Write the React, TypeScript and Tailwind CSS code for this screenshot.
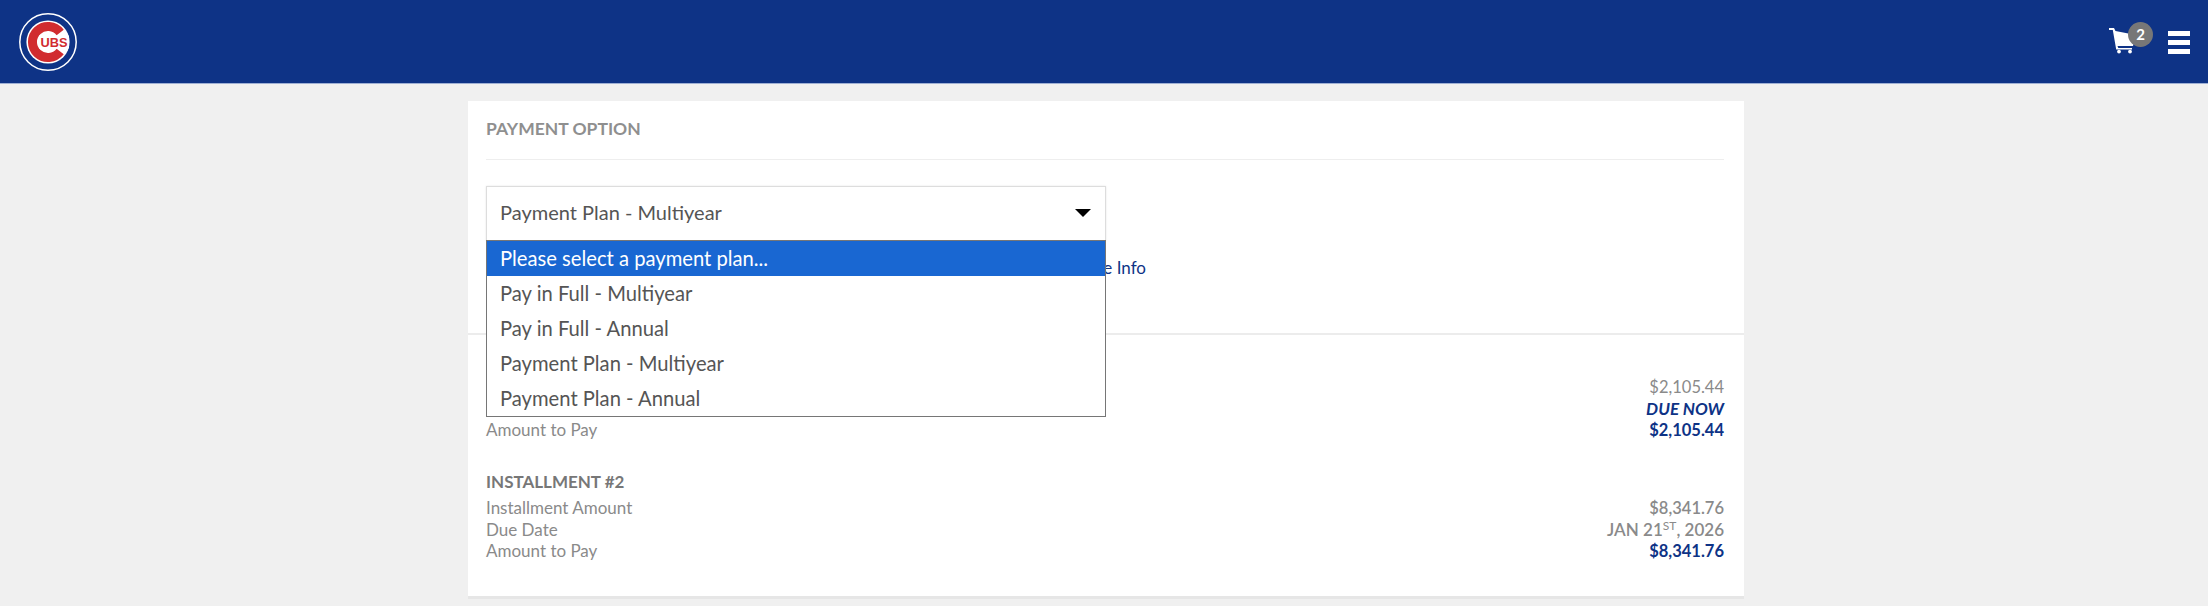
import React from 'react';

const font = { fontFamily: 'Lato, "Open Sans", sans-serif' };

const plans = ['Pay in Full - Multiyear', 'Pay in Full - Annual', 'Payment Plan - Multiyear', 'Payment Plan - Annual'];

const CubsLogo = () => (
  <svg width="60" height="60" viewBox="0 0 60 60">
    <circle cx="30" cy="30" r="28.2" fill="none" stroke="#ffffff" strokeWidth="1.5" />
    <circle cx="30" cy="30" r="21.6" fill="#ffffff" />
    <path d="M42.2 20.5 A15.5 15.5 0 1 0 42.2 39.5" fill="none" stroke="#d12c2f" strokeWidth="9" />
    <rect x="21" y="23.5" width="30" height="13" fill="#ffffff" />
    <text x="36" y="35" textAnchor="middle" fontFamily="Liberation Sans, sans-serif" fontWeight="700" fontSize="13" fill="#d12c2f" textLength="27" lengthAdjust="spacingAndGlyphs">UBS</text>
  </svg>
);

const CartIcon = () => (
  <svg width="28" height="27" viewBox="0 0 28 27" fill="#ffffff">
    <path d="M0 1 H5 L6.5 4 L27 8 L24 19 H8.5 L9.3 21 H23 V22.6 H7.2 L3.8 3 H0 Z" />
    <circle cx="10" cy="24.6" r="1.9" />
    <circle cx="21" cy="24.6" r="1.9" />
  </svg>
);

const Row = ({ label, children }: { label: string; children: React.ReactNode }) => (
  <div className="flex justify-between h-[21.7px] leading-[21.7px]">
    <span className="text-[#8a8a8a]">{label}</span>
    <span>{children}</span>
  </div>
);

export default function App() {
  return (
    <div className="min-h-[606px] bg-[#f0f0f0] overflow-hidden" style={font}>
      {/* Top bar */}
      <header className="h-[84px] bg-[#0e3386] border-b border-[#9fb0d4] flex items-center justify-between pl-[18px] pr-[18px]">
        <CubsLogo />
        <div className="flex items-center">
          <div className="relative w-[28px] h-[27px] mr-[31px] mt-[-2px]">
            <CartIcon />
            <span className="absolute left-[19px] top-[-5px] w-[25px] h-[25px] rounded-full bg-[#777777] text-white text-[15px] font-bold flex items-center justify-center">2</span>
          </div>
          <div className="flex flex-col gap-[4px] w-[22px] mt-[2px]">
            <div className="h-[5px] bg-white"></div>
            <div className="h-[5px] bg-white"></div>
            <div className="h-[5px] bg-white"></div>
          </div>
        </div>
      </header>

      {/* Card */}
      <main className="w-[1276px] ml-[468px] mt-[17px] bg-white border-b-[3px] border-[#e6e6e6]">
        <section className="h-[234px] pl-[18px] pr-[20px] border-b-[2px] border-[#ececec]">
          <h2 className="h-[59px] pt-[17px] text-[17.5px] leading-[22px] font-bold text-[#8f8f8f] border-b border-[#eeeeee]">PAYMENT OPTION</h2>

          <div className="relative w-[620px] mt-[26px]">
            <div className="h-[55px] border border-[#dddddd] shadow-[0_0_2px_rgba(0,0,0,0.1)] flex items-center justify-between pl-[13px] pr-[14px] pb-[3px] text-[20px] text-[#555555]">
              <span>Payment Plan - Multiyear</span>
              <span className="w-0 h-0 border-x-[8px] border-x-transparent border-t-[8px] border-t-black mt-[1px]"></span>
            </div>
            <ul className="absolute z-10 left-0 top-[54px] w-full bg-white border border-[#767676] text-[20.2px] leading-[34.5px] text-[#555555]">
              <li className="h-[35px] pl-[13px] bg-[#1967d2] text-white">Please select a payment plan...</li>
              {plans.map((plan) => (
                <li key={plan} className="h-[35px] pl-[13px]">{plan}</li>
              ))}
            </ul>
          </div>

          <a className="block mt-[16px] ml-[500px] w-[160px] text-right text-[17px] leading-[22px] text-[#0e3386]">More Info</a>
        </section>

        <section className="pl-[18px] pr-[20px] pt-[16px] pb-[34px] text-[17px]">
          <div>
            <h3 className="h-[25px] leading-[24px] font-bold text-[#777777]">INSTALLMENT #1</h3>
            <Row label="Installment Amount"><span className="text-[16.5px] text-[#8a8a8a]">$2,105.44</span></Row>
            <Row label="Due Date"><span className="italic font-bold text-[#0e3386]">DUE NOW</span></Row>
            <Row label="Amount to Pay"><span className="text-[16.5px] font-bold text-[#0e3386]">$2,105.44</span></Row>
          </div>
          <div className="mt-[29px]">
            <h3 className="h-[27px] leading-[24px] font-bold text-[#777777]">INSTALLMENT #2</h3>
            <Row label="Installment Amount"><span className="text-[16.5px] font-semibold text-[#8a8a8a]">$8,341.76</span></Row>
            <Row label="Due Date">
              <span className="font-semibold text-[#8a8a8a]">JAN 21<sup className="text-[12px] font-normal">ST</sup>, 2026</span>
            </Row>
            <Row label="Amount to Pay"><span className="text-[16.5px] font-bold text-[#0e3386]">$8,341.76</span></Row>
          </div>
        </section>
      </main>
    </div>
  );
}
